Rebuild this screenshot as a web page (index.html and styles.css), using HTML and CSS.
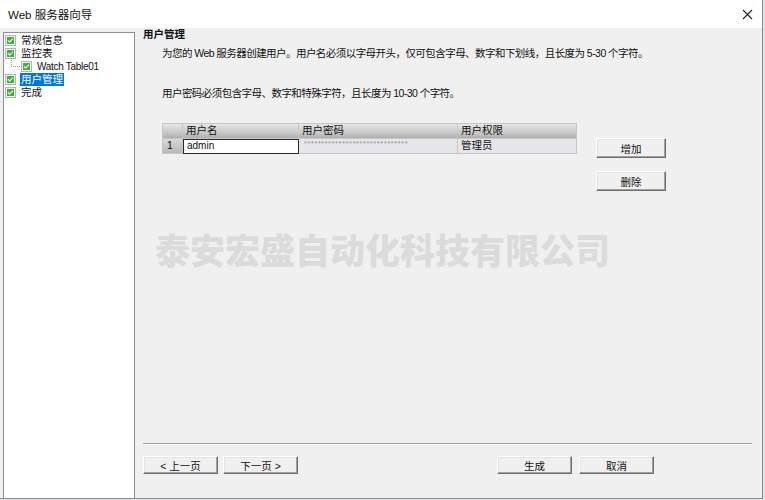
FILE: index.html
```html
<!DOCTYPE html>
<html lang="zh-CN">
<head>
<meta charset="utf-8">
<title>Web 服务器向导</title>
<link rel="stylesheet" href="styles.css">
</head>
<body>
<div class="window">
  <div class="titlebar">
    <span class="title">Web 服务器向导</span>
    <svg class="close" width="11" height="11" viewBox="0 0 11 11"><path d="M1 1 L10 10 M10 1 L1 10" stroke="#222" stroke-width="1.1" fill="none"/></svg>
  </div>
  <div class="main">
    <div class="sidebar">
      <ul class="tree">
        <li class="node"><span class="cb"><svg width="11" height="11" viewBox="0 0 11 11"><rect x="0.5" y="0.5" width="10" height="10" fill="#f4f4f4" stroke="#b4b4b4"/><rect x="2" y="2" width="7" height="7" fill="#3fae3f"/><path d="M3 5.3 L4.7 7 L8 3.6" stroke="#d8f5c8" stroke-width="1.3" fill="none"/></svg></span><span class="lbl">常规信息</span></li>
        <li class="node"><span class="cb"><svg width="11" height="11" viewBox="0 0 11 11"><rect x="0.5" y="0.5" width="10" height="10" fill="#f4f4f4" stroke="#b4b4b4"/><rect x="2" y="2" width="7" height="7" fill="#3fae3f"/><path d="M3 5.3 L4.7 7 L8 3.6" stroke="#d8f5c8" stroke-width="1.3" fill="none"/></svg></span><span class="lbl">监控表</span></li>
        <li class="node child"><span class="connector"></span><span class="cb"><svg width="11" height="11" viewBox="0 0 11 11"><rect x="0.5" y="0.5" width="10" height="10" fill="#f4f4f4" stroke="#b4b4b4"/><rect x="2" y="2" width="7" height="7" fill="#3fae3f"/><path d="M3 5.3 L4.7 7 L8 3.6" stroke="#d8f5c8" stroke-width="1.3" fill="none"/></svg></span><span class="lbl latin">Watch Table01</span></li>
        <li class="node"><span class="cb"><svg width="11" height="11" viewBox="0 0 11 11"><rect x="0.5" y="0.5" width="10" height="10" fill="#f4f4f4" stroke="#b4b4b4"/><rect x="2" y="2" width="7" height="7" fill="#3fae3f"/><path d="M3 5.3 L4.7 7 L8 3.6" stroke="#d8f5c8" stroke-width="1.3" fill="none"/></svg></span><span class="lbl selected">用户管理</span></li>
        <li class="node"><span class="cb"><svg width="11" height="11" viewBox="0 0 11 11"><rect x="0.5" y="0.5" width="10" height="10" fill="#f4f4f4" stroke="#b4b4b4"/><rect x="2" y="2" width="7" height="7" fill="#3fae3f"/><path d="M3 5.3 L4.7 7 L8 3.6" stroke="#d8f5c8" stroke-width="1.3" fill="none"/></svg></span><span class="lbl">完成</span></li>
      </ul>
    </div>
    <div class="content">
      <div class="heading">用户管理</div>
      <p class="desc first">为您的 Web 服务器创建用户。用户名必须以字母开头，仅可包含字母、数字和下划线，且长度为 5-30 个字符。</p>
      <p class="desc second">用户密码必须包含字母、数字和特殊字符，且长度为 10-30 个字符。</p>
      <div class="table-area">
        <div class="grid">
          <div class="hcell rownum"></div>
          <div class="hcell">用户名</div>
          <div class="hcell">用户密码</div>
          <div class="hcell">用户权限</div>
          <div class="rcell rownum">1</div>
          <div class="rcell edit">admin</div>
          <div class="rcell pwd">******************************</div>
          <div class="rcell">管理员</div>
        </div>
        <div class="side-buttons">
          <button class="btn">增加</button>
          <button class="btn">删除</button>
        </div>
      </div>
      <div class="spacer"></div>
      <div class="separator"></div>
      <div class="footer">
        <button class="btn nav">&lt; 上一页</button>
        <button class="btn nav">下一页 &gt;</button>
        <span class="grow"></span>
        <button class="btn nav">生成</button>
        <button class="btn nav cancel">取消</button>
      </div>
      <div class="watermark">泰安宏盛自动化科技有限公司</div>
    </div>
  </div>
</div>
</body>
</html>
```
FILE: styles.css
```css
html, body {
  margin: 0;
  padding: 0;
  background: #dfe3e8;
}
body {
  width: 765px;
  height: 500px;
  overflow: hidden;
  font-family: "Liberation Sans", "Noto Sans CJK SC", sans-serif;
  font-size: 10.5px;
  color: #111;
}
.window {
  width: 762px;
  height: 498px;
  border-right: 1px solid #8a8a8a;
  border-bottom: 1px solid #8a8a8a;
  background: #f0f0f0;
  display: flex;
  flex-direction: column;
}
.titlebar {
  height: 28px;
  flex: none;
  background: #fff;
  display: flex;
  align-items: center;
  padding: 0 9px 0 8px;
}
.title {
  font-size: 11.5px;
  color: #111;
  flex: 1;
}
.close {
  display: block;
}
.main {
  flex: 1;
  display: flex;
  min-height: 0;
}
.sidebar {
  width: 130px;
  margin: 4px 0 0 3px;
  background: #fff;
  border: 1px solid #8f8f8f;
  border-bottom: none;
  flex: none;
}
.tree {
  list-style: none;
  margin: 0;
  padding: 1px 0 0 1px;
}
.node {
  height: 13px;
  display: flex;
  align-items: center;
}
.cb {
  width: 11px;
  height: 11px;
  flex: none;
  display: block;
}
.cb svg {
  display: block;
}
.lbl {
  margin-left: 4px;
  line-height: 13px;
  padding: 0 1px;
  white-space: nowrap;
}
.latin {
  font-size: 10px;
  letter-spacing: -0.3px;
}
.selected {
  background: #0078d7;
  color: #fff;
}
.child {
  padding-left: 6px;
}
.connector {
  width: 11px;
  height: 19px;
  flex: none;
  border-left: 1px dotted #9a9a9a;
  border-bottom: 1px dotted #9a9a9a;
  box-sizing: border-box;
  align-self: flex-start;
  margin-top: -12px;
  margin-right: -1px;
}
.content {
  flex: 1;
  display: flex;
  flex-direction: column;
  padding: 0 10px 0 8px;
  position: relative;
}
.heading {
  font-weight: bold;
  line-height: 13px;
}
.desc {
  margin: 0;
  padding-left: 19px;
  line-height: 13px;
  white-space: nowrap;
  letter-spacing: -0.55px;
}
.desc.first {
  margin-top: 6px;
}
.desc.second {
  margin-top: 27px;
}
.table-area {
  display: flex;
  align-items: flex-start;
  margin-top: 23px;
  padding-left: 19px;
}
.grid {
  display: grid;
  grid-template-columns: 20px 116px 159px 119px;
  grid-template-rows: 15px 15px;
  border: 1px solid #c6c6c6;
  border-right: none;
  border-bottom: none;
}
.hcell, .rcell {
  border-right: 1px solid #c6c6c6;
  border-bottom: 1px solid #c6c6c6;
  box-sizing: border-box;
  line-height: 13px;
  padding-left: 3px;
  white-space: nowrap;
  overflow: hidden;
}
.hcell {
  background: linear-gradient(#e6e6e6, #c4c4c4 70%, #aeaeae);
}
.rcell {
  background: #e6e6ea;
}
.rcell.rownum {
  background: linear-gradient(#d8d8d8, #b8b8b8);
  padding-left: 4px;
}
.rcell.edit {
  background: #fff;
  border: 1px solid #2a2a2a;
  line-height: 12px;
  font-size: 10px;
}
.rcell.pwd {
  font-size: 7px;
  color: #8a8a8a;
  letter-spacing: 0.75px;
  line-height: 9px;
  padding-left: 5px;
}
.side-buttons {
  display: flex;
  flex-direction: column;
  gap: 13px;
  margin-left: 19px;
  margin-top: 15px;
}
.btn {
  font: inherit;
  width: 70px;
  height: 20px;
  padding: 0;
  background: #f0f0f0;
  border: 1px solid;
  border-color: #fff #6e6e6e #6e6e6e #fff;
  box-shadow: inset -1px -1px 0 #a0a0a0, inset 1px 1px 0 #e3e3e3;
  color: #111;
  text-align: center;
}
.spacer {
  flex: 1;
}
.separator {
  height: 0;
  border-top: 1px solid #a0a0a0;
  border-bottom: 1px solid #ffffff;
}
.footer {
  display: flex;
  gap: 5px;
  margin-top: 11px;
  margin-bottom: 24px;
}
.btn.nav {
  width: 75px;
  height: 18px;
}
.btn.cancel {
  margin-left: 2px;
  margin-right: 98px;
}
.grow {
  flex: 1;
}
.watermark {
  position: absolute;
  left: 20px;
  top: 201px;
  font-size: 35px;
  font-weight: 900;
  font-family: "Noto Sans CJK SC", sans-serif;
  color: #dbdbdb;
  line-height: 40px;
  white-space: nowrap;
  pointer-events: none;
}
```
